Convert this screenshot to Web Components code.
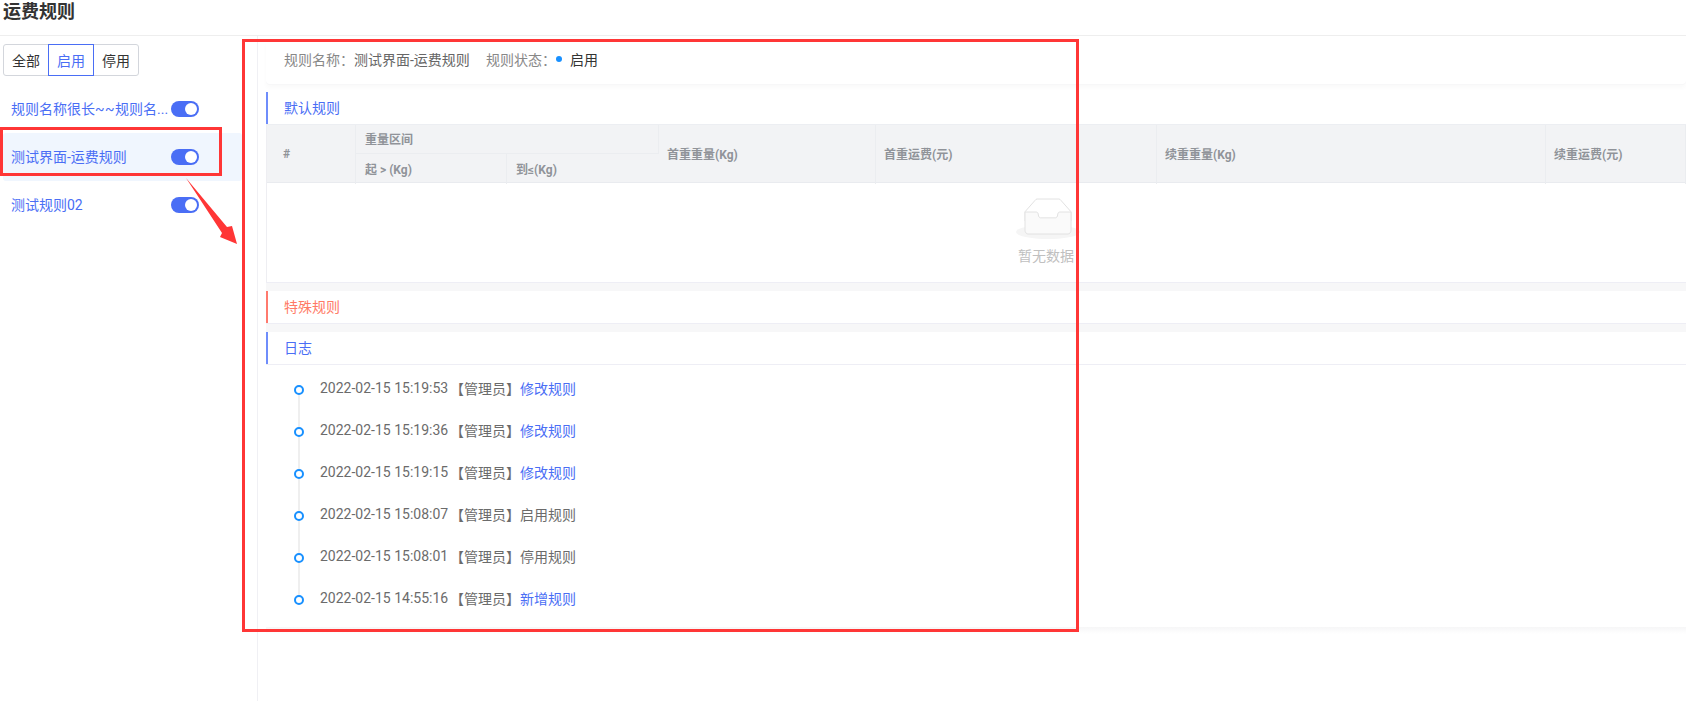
<!DOCTYPE html>
<html lang="zh">
<head>
<meta charset="utf-8">
<title>运费规则</title>
<style>
  html, body { margin: 0; height: 100%; background: #fff; }
  body { font: 14px Roboto, "Noto Sans CJK SC", sans-serif; color: #333; overflow: hidden; }
</style>
</head>
<body>
<rule-page>
  <rule-side slot="side" active="启用">
    <rule-item name="规则名称很长~~规则名..."></rule-item>
    <rule-item name="测试界面-运费规则" selected></rule-item>
    <rule-item name="测试规则02"></rule-item>
  </rule-side>
  <rule-summary name="测试界面-运费规则" status="启用"></rule-summary>
  <rule-section label="默认规则"><rule-table></rule-table></rule-section>
  <rule-section label="特殊规则" tone="red"></rule-section>
  <rule-section label="日志" plain>
    <rule-log>
      <log-row time="2022-02-15 15:19:53" action="修改规则" link></log-row>
      <log-row time="2022-02-15 15:19:36" action="修改规则" link></log-row>
      <log-row time="2022-02-15 15:19:15" action="修改规则" link></log-row>
      <log-row time="2022-02-15 15:08:07" action="启用规则"></log-row>
      <log-row time="2022-02-15 15:08:01" action="停用规则"></log-row>
      <log-row time="2022-02-15 14:55:16" action="新增规则" link></log-row>
    </rule-log>
  </rule-section>
</rule-page>

<script>
class RulePage extends HTMLElement {
  connectedCallback() {
    this.attachShadow({ mode: 'open' });
    this.shadowRoot.innerHTML = `
      <style>
        :host { display: block; position: relative; width: 1686px; height: 701px; overflow: hidden; }
        h1 { margin: 0; height: 36px; box-sizing: border-box; padding: 0 0 0 3px; font-size: 18px; line-height: 24px; font-weight: 700; color: #333; border-bottom: 1px solid #eeeeee; }
        .body { display: grid; grid-template-columns: 258px 1fr; height: 665px; }
        .side { border-right: 1px solid #f0f0f4; }
        .main { padding: 4px 0 0 8px; display: flex; flex-direction: column; }
        .frame { position: absolute; box-sizing: border-box; border: 3px solid #ff3636; pointer-events: none; }
        .frame.big { left: 242px; top: 39px; width: 837px; height: 593px; }
        .frame.small { left: 0; top: 127px; width: 222px; height: 49px; }
        svg { position: absolute; left: 180px; top: 172px; }
      </style>
      <h1>运费规则</h1>
      <div class="body">
        <div class="side"><slot name="side"></slot></div>
        <div class="main"><slot></slot></div>
      </div>
      <div class="frame big"></div>
      <div class="frame small"></div>
      <svg width="62" height="78" viewBox="0 0 62 78"><path d="M6 6 L47 55 L52 54 L57 72 L40 65 L42 61 Z" fill="#ff3636"/></svg>
    `;
  }
}

class RuleSide extends HTMLElement {
  connectedCallback() {
    const active = this.getAttribute('active');
    const tabs = ['全部', '启用', '停用'].map(t =>
      `<button class="${t === active ? 'on' : ''}">${t}</button>`).join('');
    this.attachShadow({ mode: 'open' });
    this.shadowRoot.innerHTML = `
      <style>
        :host { display: block; padding: 8px 15px 0 3px; }
        .tabs { display: flex; width: 136px; height: 32px; margin-bottom: 9px; }
        button { flex: 1; padding: 0; margin: 0 0 0 -1px; font: inherit; font-size: 14px; color: #333; background: #fff; border: 1px solid #d3d6dc; }
        button:first-child { margin-left: 0; border-radius: 3px 0 0 3px; }
        button:last-child { border-radius: 0 3px 3px 0; }
        button.on { color: #4a6ef5; border-color: #4a6ef5; position: relative; z-index: 1; }
      </style>
      <div class="tabs">${tabs}</div>
      <slot></slot>
    `;
  }
}

class RuleItem extends HTMLElement {
  connectedCallback() {
    const name = this.getAttribute('name').replace(/~~/g, '<span class="tilde">~~</span>');
    this.attachShadow({ mode: 'open' });
    this.shadowRoot.innerHTML = `
      <style>
        :host { display: flex; align-items: center; height: 48px; padding: 0 40px 0 8px; border-radius: 3px; color: #4a6ef5; }
        :host([selected]) { background: #f0f6fe; }
        .name { width: 160px; padding-bottom: 3px; white-space: nowrap; }
        .tilde { letter-spacing: .5px; }
        .toggle { position: relative; width: 28px; height: 16px; flex: none; border-radius: 8px; background: #4a6ef5; }
        .toggle::after { content: ''; position: absolute; right: 2px; top: 2px; width: 12px; height: 12px; border-radius: 50%; background: #fff; }
      </style>
      <span class="name">${name}</span>
      <span class="toggle"></span>
    `;
  }
}

class RuleSummary extends HTMLElement {
  connectedCallback() {
    this.attachShadow({ mode: 'open' });
    this.shadowRoot.innerHTML = `
      <style>
        :host { display: flex; align-items: center; height: 44px; padding: 0 0 7px 18px; box-sizing: border-box; border-radius: 4px; background: #fff; color: #888; margin-bottom: 8px; box-shadow: 0 1px 0 #f7f7f8, 0 4px 5px rgba(0,0,0,.025); }
        .val { color: #666; margin-right: 6px; width: 126px; white-space: nowrap; }
        .dot { width: 6px; height: 6px; margin: 0 8px 0 0; border-radius: 50%; background: #1890ff; }
        .st { color: #333; }
      </style>
      <span>规则名称：</span><span class="val">${this.getAttribute('name')}</span>
      <span>规则状态：</span><span class="dot"></span><span class="st">${this.getAttribute('status')}</span>
    `;
  }
}

class RuleSection extends HTMLElement {
  connectedCallback() {
    this.attachShadow({ mode: 'open' });
    this.shadowRoot.innerHTML = `
      <style>
        :host { display: block; background: #fff; }
        .head { height: 32px; box-sizing: border-box; line-height: 32px; padding-left: 16px; border-left: 2px solid #6f8dfb; color: #4a6ef5; }
        :host([tone="red"]) .head { color: #ff7a66; border-left-color: #ff7a6e; }
        .rule { border-top: 1px solid #eeeef5; height: 8px; background: #f7f7f8; }
        :host([plain]) .rule { display: none; }
      </style>
      <div class="head">${this.getAttribute('label')}</div>
      <slot></slot>
      <div class="rule"></div>
    `;
  }
}

class RuleTable extends HTMLElement {
  connectedCallback() {
    this.attachShadow({ mode: 'open' });
    this.shadowRoot.innerHTML = `
      <style>
        :host { display: block; border-left: 1px solid #eeeef2; }
        .head { display: grid; height: 59px; grid-template-columns: 89px 151px 152px 217px 281px 389px 1fr; grid-template-rows: 29px 30px; background: #f2f3f5; border-top: 1px solid #eceef2; border-bottom: 1px solid #e9ebef; box-sizing: border-box; font-size: 12px; font-weight: 700; color: #909399; }
        .head div { display: flex; align-items: center; padding-left: 9px; padding-bottom: 2px; border-right: 1px solid #ebedf0; }
        .head div:last-child { border-right: 0; }
        .head .tall { padding-left: 8px; }
        .head .tall.num { padding-left: 16px; }
        .head .wide { padding-bottom: 1px; }
        .wide { grid-column: span 2; border-bottom: 1px solid #ebedf0; }
        .sub { grid-row: 2; }
        .sub.a { grid-column: 2; }
        .sub.b { grid-column: 3; }
        .tall { grid-row: 1 / 3; }
        .empty { height: 99px; box-sizing: border-box; padding: 15px 0 0 749px; color: #c0c0c0; font-size: 14px; }
        .empty svg { display: block; }
        .empty span { display: block; width: 64px; text-align: center; margin: 7px 0 0 -2px; line-height: 20px; white-space: nowrap; }
      </style>
      <div class="head">
        <div class="tall num">#</div>
        <div class="wide">重量区间</div>
        <div class="tall" style="grid-column:4">首重重量(Kg)</div>
        <div class="tall" style="grid-column:5">首重运费(元)</div>
        <div class="tall" style="grid-column:6">续重重量(Kg)</div>
        <div class="tall" style="grid-column:7">续重运费(元)</div>
        <div class="sub a">起 &gt; (Kg)</div>
        <div class="sub b">到≤(Kg)</div>
      </div>
      <div class="empty">
        <svg width="64" height="41" viewBox="0 0 64 41"><g transform="translate(0 1)" fill="none" fill-rule="evenodd"><ellipse fill="#f5f5f5" cx="32" cy="33" rx="32" ry="7"/><g fill-rule="nonzero" stroke="#e2e2e2"><path d="M55 12.76L44.854 1.258C44.367.474 43.656 0 42.907 0H21.093c-.749 0-1.46.474-1.947 1.257L9 12.761V22h46v-9.24z"/><path d="M41.613 15.931c0-1.605.994-2.93 2.227-2.931H55v18.137C55 33.26 53.68 35 52.05 35h-40.1C10.32 35 9 33.259 9 31.137V13h11.16c1.233 0 2.227 1.323 2.227 2.928v.022c0 1.605 1.005 2.901 2.237 2.901h14.752c1.232 0 2.237-1.308 2.237-2.913v-.007z" fill="#fafafa"/></g></g></svg>
        <span>暂无数据</span>
      </div>
    `;
  }
}

class RuleLog extends HTMLElement {
  connectedCallback() {
    this.attachShadow({ mode: 'open' });
    this.shadowRoot.innerHTML = `
      <style>
        :host { display: block; padding: 4px 0 6px; border-top: 1px solid #eeeef5; }
        .fade { height: 7px; margin-top: 6px; background: linear-gradient(#f6f6f7, #fff); }
      </style>
      <slot></slot>
      <div class="fade"></div>
    `;
  }
}

class LogRow extends HTMLElement {
  connectedCallback() {
    const cls = this.hasAttribute('link') ? 'act link' : 'act';
    this.attachShadow({ mode: 'open' });
    this.shadowRoot.innerHTML = `
      <style>
        :host { display: flex; align-items: center; height: 42px; color: #6b6b6b; position: relative; padding-left: 54px; }
        :host(:not(:last-of-type))::before { content: ''; position: absolute; left: 32px; top: 21px; width: 2px; height: 42px; background: #efefef; }
        .dot { position: absolute; left: 28px; top: 16px; width: 10px; height: 10px; box-sizing: border-box; border: 2.5px solid #1890ff; border-radius: 50%; background: #fff; }
        span:not(.dot) { padding-bottom: 5px; }
        .time { width: 130px; white-space: nowrap; }
        .link { color: #4a6ef5; }
      </style>
      <span class="dot"></span>
      <span class="time">${this.getAttribute('time')}</span><span>【管理员】</span><span class="${cls}">${this.getAttribute('action')}</span>
    `;
  }
}

customElements.define('rule-page', RulePage);
customElements.define('rule-side', RuleSide);
customElements.define('rule-item', RuleItem);
customElements.define('rule-summary', RuleSummary);
customElements.define('rule-section', RuleSection);
customElements.define('rule-table', RuleTable);
customElements.define('rule-log', RuleLog);
customElements.define('log-row', LogRow);
</script>
</body>
</html>
